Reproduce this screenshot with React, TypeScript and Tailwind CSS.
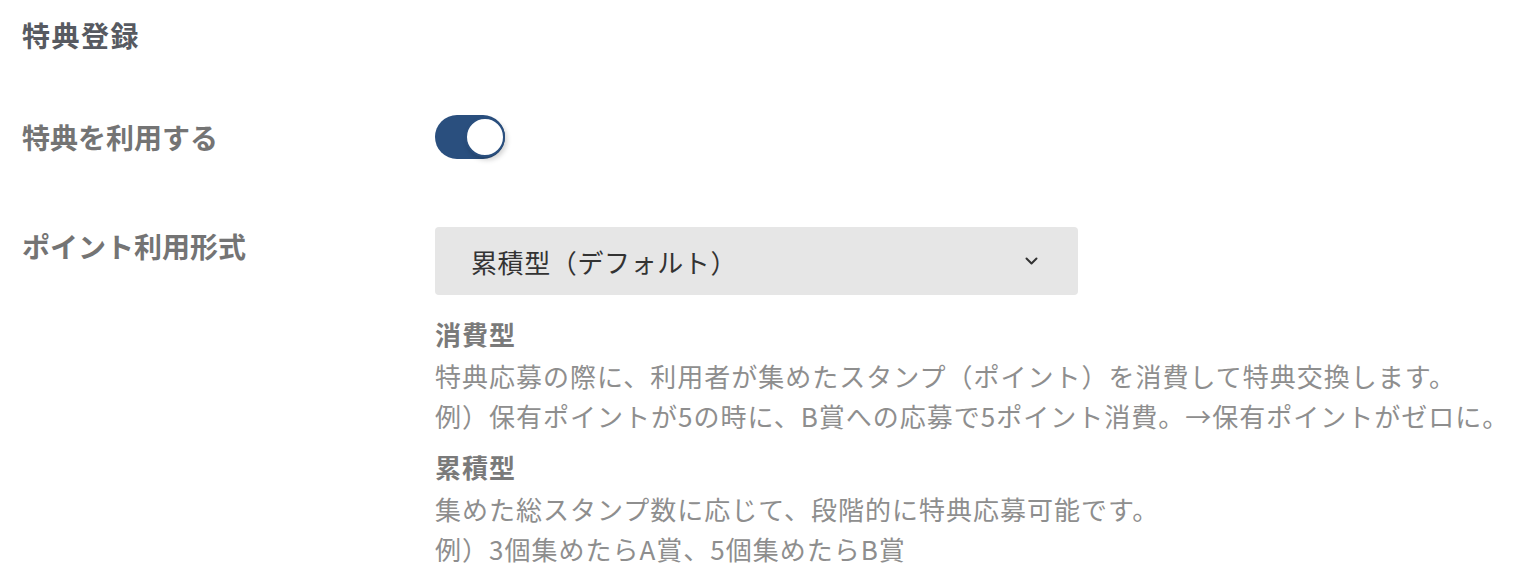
import { useState } from 'react';

const ChevronDown = () => (
  <svg width="13" height="8" viewBox="0 0 13 8" fill="none" aria-hidden="true">
    <path d="M1.5 1.5l5 5 5-5" stroke="#333333" strokeWidth="2" strokeLinecap="round" strokeLinejoin="round" />
  </svg>
);

const Toggle = ({ on, onChange }: { on: boolean; onChange: (v: boolean) => void }) => (
  <button
    type="button"
    role="switch"
    aria-checked={on}
    onClick={() => onChange(!on)}
    className={`relative h-[44px] w-[70px] shrink-0 rounded-full transition-colors ${on ? 'bg-[#2a4f7e]' : 'bg-[#cfcfcf]'}`}
  >
    <span
      className={`absolute top-[2px] h-[40px] w-[40px] rounded-full border-[2px] border-[#2a4f7e] bg-white shadow-[2px_3px_5px_rgba(0,0,0,0.18)] transition-all ${
        on ? 'right-0' : 'left-0'
      }`}
    />
  </button>
);

const App = () => {
  const [enabled, setEnabled] = useState(true);

  return (
    <div
      className="min-h-screen bg-white px-[22px] pt-[15px] text-[#747474]"
      style={{ fontFamily: '"Noto Sans CJK JP", "Noto Sans", sans-serif' }}
    >
      <h2 className="text-[28px] leading-[40px] font-bold tracking-[1.5px] text-[#575a61]">特典登録</h2>

      {/* 特典を利用する */}
      <div className="mt-[60px] flex items-center">
        <div className="w-[413px] shrink-0 text-[28px] leading-[40px] font-bold">特典を利用する</div>
        <Toggle on={enabled} onChange={setEnabled} />
      </div>

      {/* ポイント利用形式 */}
      <div className="mt-[68px] flex items-start">
        <div className="w-[413px] shrink-0 text-[28px] leading-[38px] font-bold">ポイント利用形式</div>
        <div>
          <button
            type="button"
            className="flex h-[68px] w-[643px] items-center justify-between rounded-[4px] bg-[#e6e6e6] pl-[36px] pr-[40px] text-[26px] tracking-[0.6px] text-[#333333]"
          >
            <span>累積型（デフォルト）</span>
            <ChevronDown />
          </button>

          <div className="mt-[19px] text-[26px] leading-[40px] tracking-[1px] whitespace-nowrap">
            <div className="mb-[2px] font-bold text-[#7a7a7a]">消費型</div>
            <div className="text-[#8e8e8e]">
              <p>特典応募の際に、利用者が集めたスタンプ（ポイント）を消費して特典交換します。</p>
              <p>例）保有ポイントが5の時に、B賞への応募で5ポイント消費。→保有ポイントがゼロに。</p>
            </div>
            <div className="mt-[11px] mb-[2px] font-bold text-[#7a7a7a]">累積型</div>
            <div className="text-[#8e8e8e]">
              <p>集めた総スタンプ数に応じて、段階的に特典応募可能です。</p>
              <p>例）3個集めたらA賞、5個集めたらB賞</p>
            </div>
          </div>
        </div>
      </div>
    </div>
  );
};

export default App;
